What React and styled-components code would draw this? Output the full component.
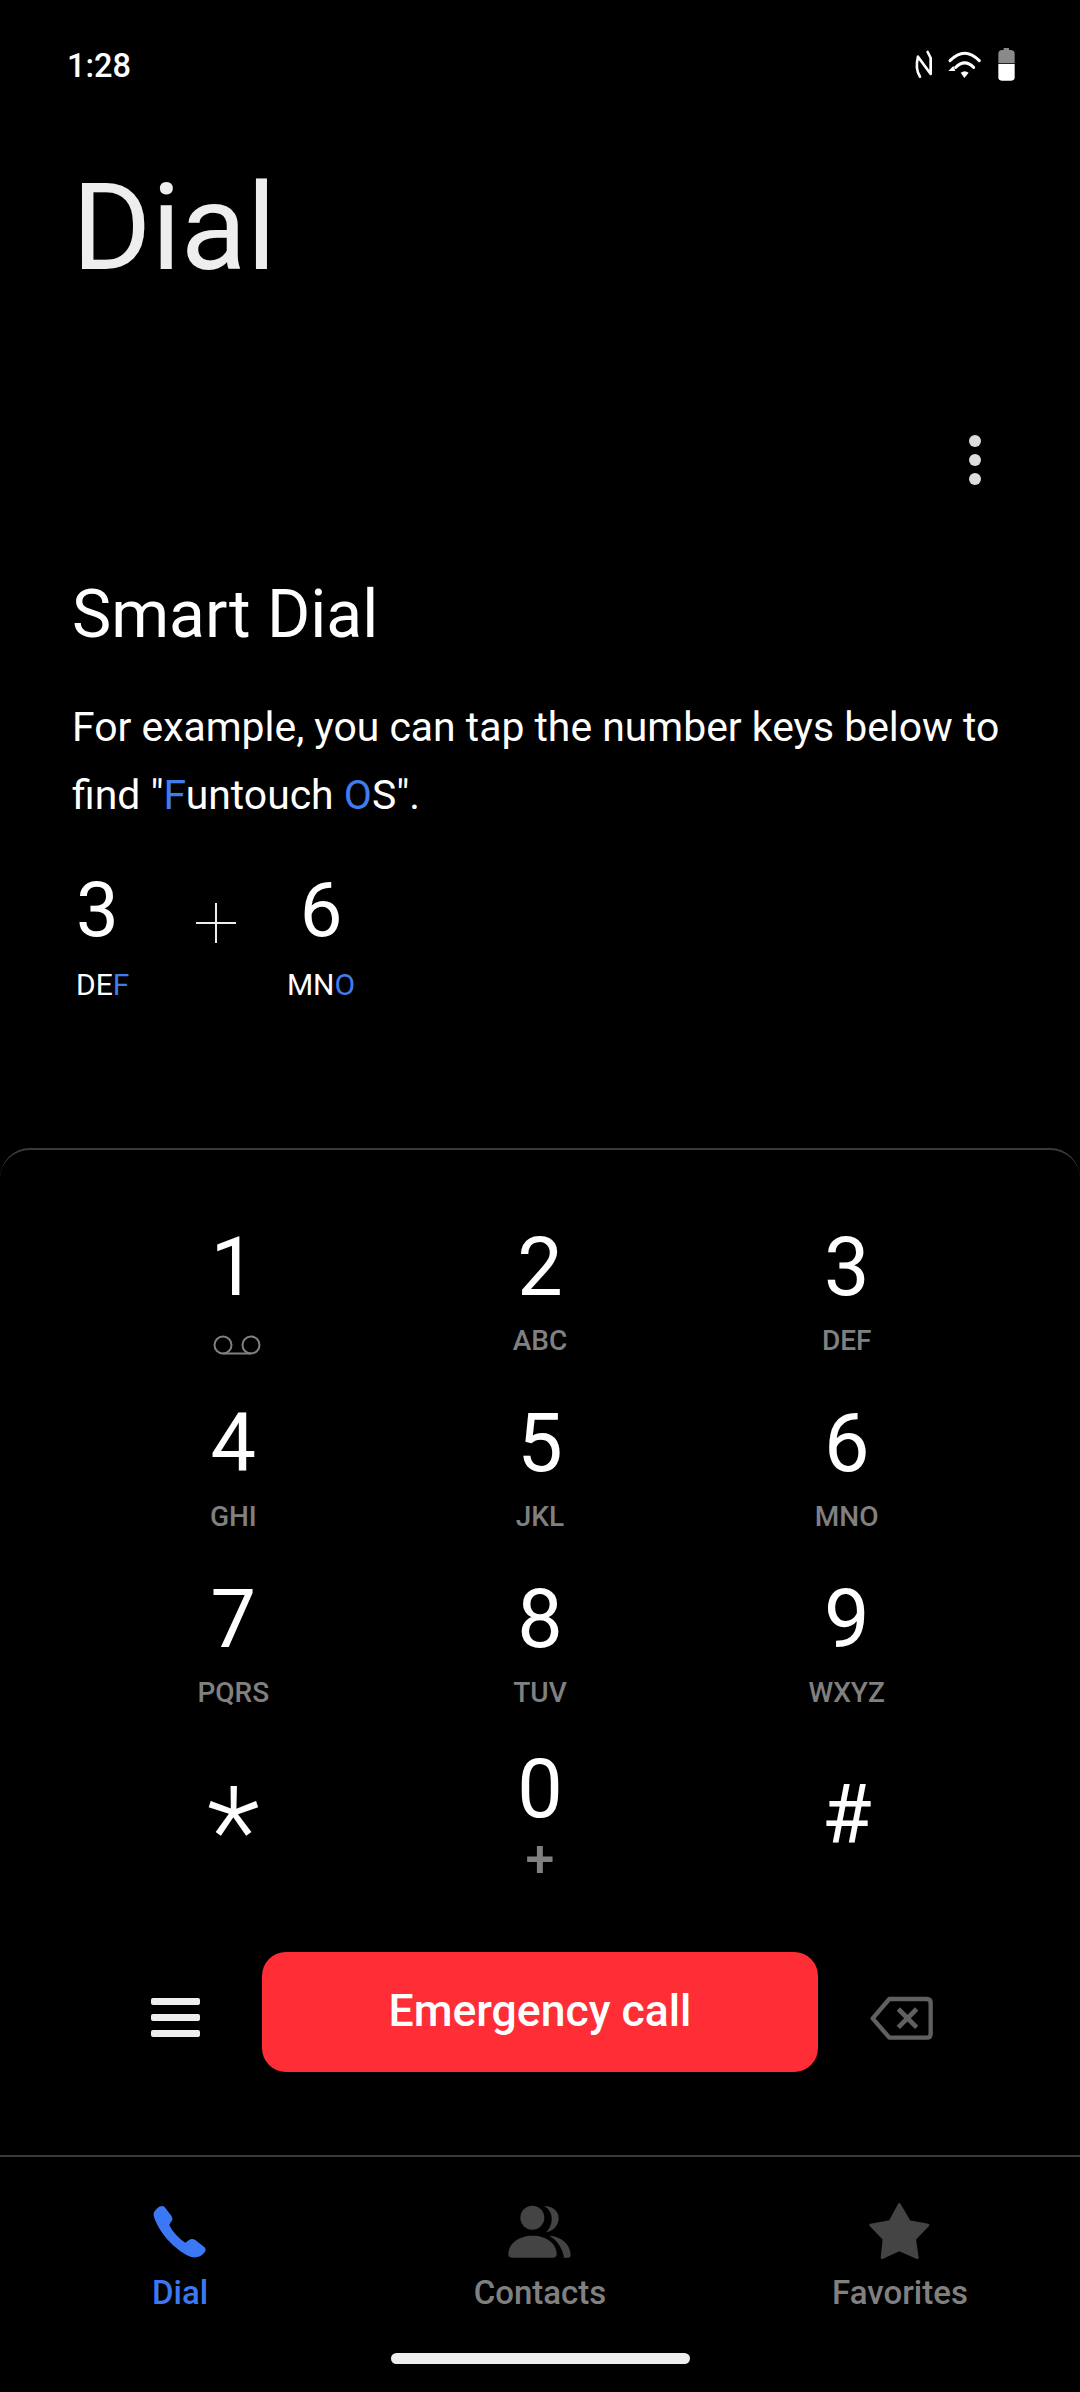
import React from "react";
import styled, { createGlobalStyle } from "styled-components";

const Global = createGlobalStyle`
  html, body { margin: 0; padding: 0; background: #000; }
  body { font-family: Roboto, "Noto Sans", sans-serif; color: #fff; }
  * { box-sizing: border-box; }
`;

const Page = styled.div`
  width: 1080px;
  height: 2392px;
  background: #000;
  overflow: hidden;
  display: flex;
  flex-direction: column;
`;

const Intro = styled.section`
  height: 1148px;
  display: flex;
  flex-direction: column;
`;

const StatusBar = styled.header`
  height: 126px;
  padding: 0 40px 0 67px;
  display: flex;
  align-items: center;
  justify-content: space-between;
`;

const Clock = styled.span`
  margin-top: 5px;
  font-size: 32.5px;
  font-weight: 500;
  color: #fff;
`;

const StatusIcons = styled.svg`
  width: 180px;
  height: 70px;
  margin-top: 4px;
`;

const Title = styled.h1`
  margin: 32px 0 0;
  padding-left: 72px;
  font-size: 121px;
  line-height: 140px;
  font-weight: 400;
  color: #eee;
`;

const MoreRow = styled.div`
  display: flex;
  justify-content: flex-end;
  padding-right: 99px;
  margin-top: 137px;
`;

const MoreDots = styled.div`
  display: flex;
  flex-direction: column;
  gap: 7px;
`;

const Dot = styled.span`
  width: 12px;
  height: 12px;
  border-radius: 50%;
  background: #ddd;
`;

const Heading = styled.h2`
  margin: 90px 0 0;
  padding-left: 72px;
  font-size: 66px;
  line-height: 80px;
  font-weight: 400;
`;

const Description = styled.p`
  margin: 38px 0 0;
  padding: 0 40px 0 72px;
  font-size: 40.9px;
  line-height: 68px;
  font-weight: 400;
`;

const Hit = styled.span`
  color: #3f7cf0;
`;

const Example = styled.div`
  margin-top: 36px;
  padding-left: 76px;
  display: flex;
  align-items: flex-start;
`;

const ExampleKey = styled.div`
  width: ${(p) => p.$width}px;
  display: flex;
  flex-direction: column;
  align-items: ${(p) => p.$align};
`;

const ExampleDigit = styled.span`
  font-size: 76px;
  line-height: 90px;
  font-weight: 400;
`;

const ExampleLetters = styled.span`
  margin-top: 10px;
  font-size: 30px;
  line-height: 40px;
`;

const PlusIcon = styled.svg`
  width: 40px;
  height: 40px;
  margin: 38px 52px 0 0;
`;

const Sheet = styled.section`
  border-top: 2px solid #3a3a3a;
  border-radius: 30px 30px 0 0;
  padding-top: 68px;
`;

const Keypad = styled.div`
  padding: 0 80px;
  display: grid;
  grid-template-columns: repeat(3, 1fr);
  grid-auto-rows: 176px;
`;

const Key = styled.div`
  display: flex;
  flex-direction: column;
  align-items: center;
`;

const Digit = styled.span`
  font-size: 81px;
  line-height: 100px;
  font-weight: 400;
  margin-top: ${(p) => p.$offset || 0}px;
`;

const Star = styled.span`
  font-size: 124px;
  line-height: 100px;
  height: 100px;
  font-weight: 300;
  margin-top: 37px;
`;

const Letters = styled.span`
  font-size: 28px;
  line-height: 46px;
  font-weight: 500;
  color: #808080;
`;

const PlusLetter = styled.span`
  font-size: 52px;
  line-height: 40px;
  font-weight: 500;
  color: #808080;
`;

const VoicemailIcon = styled.svg`
  width: 52px;
  height: 24px;
  margin: 16px 0 0 7px;
`;

const Actions = styled.div`
  margin-top: 30px;
  padding-left: 151px;
  display: flex;
  align-items: flex-start;
`;

const MenuIcon = styled.svg`
  width: 49px;
  height: 39px;
  margin: 46px 62px 0 0;
`;

const EmergencyButton = styled.button`
  width: 556px;
  height: 120px;
  padding: 0 0 3px;
  border: 0;
  border-radius: 24px;
  background: #ff2d35;
  color: #fff;
  font: 500 44.5px Roboto, sans-serif;
`;

const BackspaceIcon = styled.svg`
  width: 80px;
  height: 65px;
  margin: 33px 0 0 42px;
`;

const TabBar = styled.nav`
  margin-top: 83px;
  border-top: 2px solid #3a3a3a;
  padding-top: 38px;
  display: grid;
  grid-template-columns: repeat(3, 360px);
`;

const Tab = styled.div`
  display: flex;
  flex-direction: column;
  align-items: center;
  color: ${(p) => (p.$active ? "#3b78f5" : "#808080")};
  font-size: 33px;
  line-height: 46px;
  font-weight: 500;
`;

const TabIcon = styled.svg`
  width: 80px;
  height: 75px;
`;

const HomeBar = styled.div`
  width: 299px;
  height: 11px;
  margin: 37px auto 0;
  border-radius: 6px;
  background: #eee;
`;

const rows = [
  ["2", "ABC"], ["3", "DEF"],
  ["4", "GHI"], ["5", "JKL"], ["6", "MNO"],
  ["7", "PQRS"], ["8", "TUV"], ["9", "WXYZ"],
];

export default function App() {
  return (
    <Page>
      <Global />
      <Intro>
        <StatusBar>
          <Clock>1:28</Clock>
          <StatusIcons viewBox="0 0 540 210">
            <path d="M203 66 L212 84 V132 L174 80 C169 100 168 122 180 140" fill="none" stroke="#fff" strokeWidth="8" strokeLinejoin="round" strokeLinecap="round" />
            <path d="M270 92 C300 62 328 62 358 92" fill="none" stroke="#fff" strokeWidth="9" strokeLinecap="round" />
            <path d="M287 112 C305 94 323 94 341 112" fill="none" stroke="#fff" strokeWidth="9" strokeLinecap="round" />
            <path d="M302 128 C310 122 318 122 326 128 L313 144 Z" fill="#fff" />
            <path d="M265 123 L280 108 L286 123 Z" fill="#fff" />
            <path d="M431 54 H447 V60 H431 Z" fill="#8a8a8a" />
            <path d="M415 100 V72 Q415 60 427 60 H452 Q464 60 464 72 V100 Z" fill="#8a8a8a" />
            <path d="M415 102 H464 V142 Q464 152 454 152 H425 Q415 152 415 142 Z" fill="#fff" />
          </StatusIcons>
        </StatusBar>
        <Title>Dial</Title>
        <MoreRow>
          <MoreDots>
            <Dot />
            <Dot />
            <Dot />
          </MoreDots>
        </MoreRow>
        <Heading>Smart Dial</Heading>
        <Description>
          For example, you can tap the number keys below to find "<Hit>F</Hit>untouch <Hit>O</Hit>S".
        </Description>
        <Example>
          <ExampleKey $width={120} $align="flex-start">
            <ExampleDigit>3</ExampleDigit>
            <ExampleLetters>DE<Hit>F</Hit></ExampleLetters>
          </ExampleKey>
          <PlusIcon viewBox="0 0 40 40">
            <path d="M20 0 V40 M0 20 H40" stroke="#eee" strokeWidth="2" fill="none" />
          </PlusIcon>
          <ExampleKey $width={66} $align="center">
            <ExampleDigit>6</ExampleDigit>
            <ExampleLetters>MN<Hit>O</Hit></ExampleLetters>
          </ExampleKey>
        </Example>
      </Intro>
      <Sheet>
        <Keypad>
          <Key>
            <Digit>1</Digit>
            <VoicemailIcon viewBox="0 0 52 24">
              <circle cx="12" cy="11" r="8.5" fill="none" stroke="#808080" strokeWidth="2" />
              <circle cx="40" cy="11" r="8.5" fill="none" stroke="#808080" strokeWidth="2" />
              <path d="M12 19.5 H40" stroke="#808080" strokeWidth="2" />
            </VoicemailIcon>
          </Key>
          {rows.map(([d, l]) => (
            <Key key={d}>
              <Digit>{d}</Digit>
              <Letters>{l}</Letters>
            </Key>
          ))}
          <Key>
            <Star>*</Star>
          </Key>
          <Key>
            <Digit $offset={-6}>0</Digit>
            <PlusLetter>+</PlusLetter>
          </Key>
          <Key>
            <Digit $offset={19}>#</Digit>
          </Key>
        </Keypad>
        <Actions>
          <MenuIcon viewBox="0 0 49 39">
            <rect x="0" y="0" width="49" height="7" rx="2" fill="#eee" />
            <rect x="0" y="16" width="49" height="7" rx="2" fill="#eee" />
            <rect x="0" y="32" width="49" height="7" rx="2" fill="#eee" />
          </MenuIcon>
          <EmergencyButton>Emergency call</EmergencyButton>
          <BackspaceIcon viewBox="0 0 240 195">
            <path d="M88 42 H200 Q212 42 212 54 V146 Q212 158 200 158 H88 L38 100 Z" fill="none" stroke="#606060" strokeWidth="13" strokeLinejoin="round" />
            <path d="M115 72 L170 127 M170 72 L115 127" stroke="#606060" strokeWidth="14" fill="none" />
          </BackspaceIcon>
        </Actions>
        <TabBar>
          <Tab $active>
            <TabIcon viewBox="0 0 240 225">
              <path d="M42 52 C48 42 58 33 66 33 C72 33 76 38 80 44 L94 62 C99 70 98 76 92 82 L88 90 C96 108 116 130 136 143 L146 136 C152 131 160 131 166 135 L192 155 C198 160 198 166 194 172 C186 184 172 188 160 187 C130 182 80 140 55 95 C45 75 38 62 42 52 Z" fill="#3b78f5" />
            </TabIcon>
            Dial
          </Tab>
          <Tab>
            <TabIcon viewBox="0 0 240 225">
              <circle cx="97" cy="68" r="36" fill="#444" />
              <path d="M133 33 C158 33 176 48 176 70 C176 92 158 110 138 112 C152 98 156 82 155 68 C154 52 146 42 133 33 Z" fill="#444" />
              <path d="M25 178 C25 146 55 122 98 122 C140 122 170 146 170 178 Q170 188 160 188 H35 Q25 188 25 178 Z" fill="#444" />
              <path d="M148 122 C185 124 212 150 212 180 Q212 188 204 188 H192 C188 160 172 136 148 122 Z" fill="#444" />
            </TabIcon>
            Contacts
          </Tab>
          <Tab>
            <TabIcon viewBox="0 0 240 225">
              <path d="M118 28 L148 80 L204 90 L164 132 L172 188 L118 164 L66 188 L72 132 L32 90 L90 80 Z" fill="#444" stroke="#444" strokeWidth="8" strokeLinejoin="round" />
            </TabIcon>
            Favorites
          </Tab>
        </TabBar>
        <HomeBar />
      </Sheet>
    </Page>
  );
}
